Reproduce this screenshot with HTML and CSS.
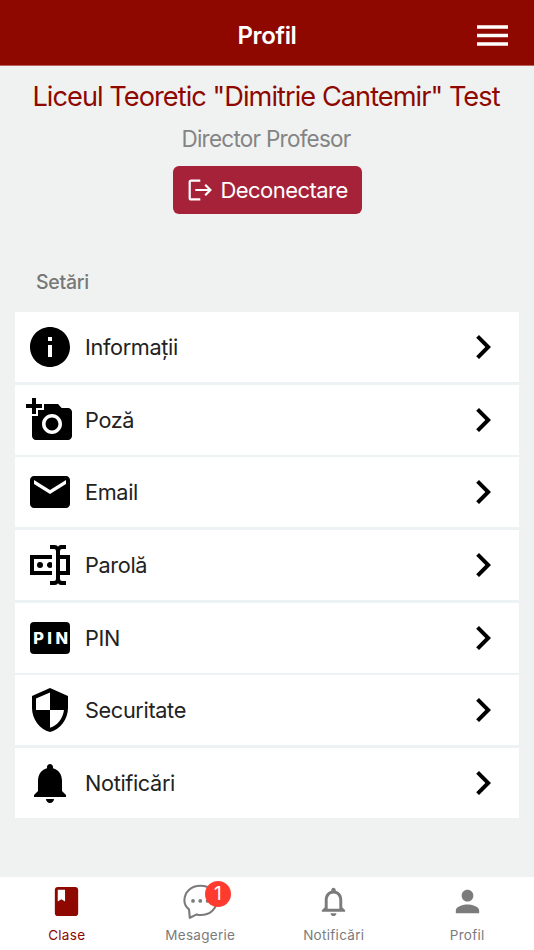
FILE: index.html
```html
<!DOCTYPE html>
<html lang="ro">
<head>
<meta charset="utf-8">
<meta name="viewport" content="width=device-width, initial-scale=1">
<title>Profil</title>
<link rel="stylesheet" href="styles.css">
</head>
<body>
<div class="app">
  <header class="topbar">
    <h1 class="topbar-title">Profil</h1>
    <button class="menu" aria-label="Meniu"><svg class="menu-icon" viewBox="0 0 31 21"><path d="M0 .3h31v3.4H0zM0 8.8h31v3.4H0zM0 17.3h31v3.4H0z"/></svg></button>
  </header>
  <main class="content">
    <section class="account">
      <h2 class="school">Liceul Teoretic "Dimitrie Cantemir" Test</h2>
      <p class="role">Director Profesor</p>
      <button class="logout">
        <svg class="logout-icon" viewBox="0 0 24 22"><path d="M12.3 1.6H3.2Q1.7 1.6 1.7 3.1V18.9Q1.7 20.4 3.2 20.4H12.3M7.3 11H22.3M17.2 5.7L22.4 11L17.2 16.3"/></svg>
        <span class="logout-text">Deconectare</span>
      </button>
    </section>
    <h3 class="group-title">Setări</h3>
    <ul class="settings">
      <li class="row"><svg class="icon" viewBox="0 0 24 24"><path d="M12 2C6.48 2 2 6.48 2 12s4.48 10 10 10 10-4.48 10-10S17.52 2 12 2zm1 15h-2v-6h2v6zm0-8h-2V7h2v2z"/></svg><span class="label">Informații</span><svg class="icon" viewBox="0 0 24 24"><path d="M8.59 16.59 13.17 12 8.59 7.41 10 6l6 6-6 6z"/></svg></li>
      <li class="row"><svg class="icon" viewBox="0 0 24 24"><path d="M3 4V1h2v3h3v2H5v3H3V6H0V4h3zm3 6V7h3V4h7l1.83 2H21c1.1 0 2 .9 2 2v12c0 1.1-.9 2-2 2H5c-1.1 0-2-.9-2-2V10h3zm7 9c2.76 0 5-2.24 5-5s-2.24-5-5-5-5 2.24-5 5 2.24 5 5 5zm-3.2-5c0 1.77 1.43 3.2 3.2 3.2s3.2-1.43 3.2-3.2-1.43-3.2-3.2-3.2-3.2 1.43-3.2 3.2z"/></svg><span class="label">Poză</span><svg class="icon" viewBox="0 0 24 24"><path d="M8.59 16.59 13.17 12 8.59 7.41 10 6l6 6-6 6z"/></svg></li>
      <li class="row"><svg class="icon" viewBox="0 0 24 24"><path d="M20 4H4c-1.1 0-2 .9-2 2v12c0 1.1.9 2 2 2h16c1.1 0 2-.9 2-2V6c0-1.1-.9-2-2-2zm0 4l-8 5-8-5V6l8 5 8-5v2z"/></svg><span class="label">Email</span><svg class="icon" viewBox="0 0 24 24"><path d="M8.59 16.59 13.17 12 8.59 7.41 10 6l6 6-6 6z"/></svg></li>
      <li class="row"><svg class="icon" viewBox="0 0 24 24"><path d="M17,7H22V17H17V19A1,1 0 0,0 18,20H20V22H17.5C16.95,22 16,21.55 16,21C16,21.55 15.05,22 14.5,22H12V20H14A1,1 0 0,0 15,19V5A1,1 0 0,0 14,4H12V2H14.5C15.05,2 16,2.45 16,3C16,2.45 16.95,2 17.5,2H20V4H18A1,1 0 0,0 17,5V7M2,7H13V9H4V15H13V17H2V7M20,15V9H17V15H20M8.5,12A1.5,1.5 0 0,0 7,10.5A1.5,1.5 0 0,0 5.5,12A1.5,1.5 0 0,0 7,13.5A1.5,1.5 0 0,0 8.5,12M13,10.89C12.39,10.33 11.44,10.38 10.88,11C10.32,11.6 10.37,12.55 11,13.11C11.55,13.63 12.43,13.63 13,13.11V10.89Z"/></svg><span class="label">Parolă</span><svg class="icon" viewBox="0 0 24 24"><path d="M8.59 16.59 13.17 12 8.59 7.41 10 6l6 6-6 6z"/></svg></li>
      <li class="row"><svg class="icon" viewBox="0 0 24 24"><rect x="2" y="4" width="20" height="16" rx="2"/><text class="pin" x="3.6" y="14.9" textLength="17.4" lengthAdjust="spacing">PIN</text></svg><span class="label">PIN</span><svg class="icon" viewBox="0 0 24 24"><path d="M8.59 16.59 13.17 12 8.59 7.41 10 6l6 6-6 6z"/></svg></li>
      <li class="row"><svg class="icon" viewBox="0 0 24 24"><path d="M12 1L3 5v6c0 5.55 3.84 10.74 9 12 5.16-1.26 9-6.45 9-12V5l-9-4zm0 10.99h7c-.53 4.12-3.28 7.79-7 8.94V12H5V6.3l7-3.11v8.8z"/></svg><span class="label">Securitate</span><svg class="icon" viewBox="0 0 24 24"><path d="M8.59 16.59 13.17 12 8.59 7.41 10 6l6 6-6 6z"/></svg></li>
      <li class="row"><svg class="icon" viewBox="0 0 24 24"><path d="M12 22c1.1 0 2-.9 2-2h-4c0 1.1.89 2 2 2zm6-6v-5c0-3.07-1.64-5.64-4.5-6.32V4c0-.83-.67-1.5-1.5-1.5s-1.5.67-1.5 1.5v.68C7.63 5.36 6 7.92 6 11v5l-2 2v1h16v-1l-2-2z"/></svg><span class="label">Notificări</span><svg class="icon" viewBox="0 0 24 24"><path d="M8.59 16.59 13.17 12 8.59 7.41 10 6l6 6-6 6z"/></svg></li>
    </ul>
  </main>
  <nav class="tabs">
    <a class="tab active"><svg class="tab-icon" viewBox="0 0 24 24"><path d="M18 2H6c-1.1 0-2 .9-2 2v16c0 1.1.9 2 2 2h12c1.1 0 2-.9 2-2V4c0-1.1-.9-2-2-2zM6 4h5v8l-2.5-1.5L6 12V4z"/></svg><span class="tab-label">Clase</span></a>
    <a class="tab"><span class="tab-badged"><svg class="tab-icon" viewBox="0 0 35 35"><path class="outline" d="M6.8 33.8L6 25.4C2.8 22.8 1.4 19.4 1.4 16.5C1.4 8 8 1.7 17.5 1.7S33.6 8 33.6 16.5S27 31 17.5 31Q15.5 31 13.8 30.4Z"/><circle cx="10" cy="16.9" r="1.9"/><circle cx="17.3" cy="16.9" r="1.9"/><circle cx="24.6" cy="16.9" r="1.9"/></svg><span class="badge">1</span></span><span class="tab-label">Mesagerie</span></a>
    <a class="tab"><svg class="tab-icon" viewBox="0 0 24 24"><path d="M12 22c1.1 0 2-.9 2-2h-4c0 1.1.9 2 2 2zm6-6v-5c0-3.07-1.63-5.64-4.5-6.32V4c0-.83-.67-1.5-1.5-1.5s-1.5.67-1.5 1.5v.68C7.64 5.36 6 7.92 6 11v5l-2 2v1h16v-1l-2-2zm-2 1H8v-6c0-2.48 1.51-4.5 4-4.5s4 2.02 4 4.5v6z"/></svg><span class="tab-label">Notificări</span></a>
    <a class="tab"><svg class="tab-icon" viewBox="0 0 24 24"><path d="M12 12c2.21 0 4-1.79 4-4s-1.79-4-4-4-4 1.79-4 4 1.79 4 4 4zm0 2c-2.67 0-8 1.34-8 4v2h16v-2c0-2.66-5.33-4-8-4z"/></svg><span class="tab-label">Profil</span></a>
  </nav>
</div>
</body>
</html>
```
FILE: styles.css
```css
* { box-sizing: border-box; }
body { margin: 0; font-family: Inter, "Liberation Sans", sans-serif; background: #f0f2f2; }
h1, h2, h3, p, ul { margin: 0; padding: 0; }
button { border: 0; font: inherit; padding: 0; }
svg { display: block; flex: none; fill: currentColor; }

.app { display: flex; flex-direction: column; height: 950px; overflow: hidden; }

.topbar { flex: none; display: grid; grid-template-columns: 1fr auto 1fr; align-items: center; height: 66px; padding: 6px 26px 0; background: #8e0800; color: #fff; border-bottom: 1px solid #b8625f; }
.topbar-title { grid-column: 2; font-size: 24px; line-height: 30px; font-weight: 600; letter-spacing: -0.35px; }
.menu { justify-self: end; width: 31px; background: none; color: #fff; }
.menu-icon { width: 31px; height: 21px; }

.content { flex: 1; display: flex; flex-direction: column; padding: 0 15px; }
.account { display: flex; flex-direction: column; align-items: center; padding-top: 13px; }
.school { padding-right: 2px; font-size: 27.2px; line-height: 36px; font-weight: 400; letter-spacing: -0.96px; color: #8e0800; white-space: nowrap; }
.role { margin-top: 9px; padding-right: 2px; font-size: 22.5px; line-height: 30px; letter-spacing: -0.74px; color: #848484; }
.logout { display: flex; align-items: center; gap: 9px; width: 189px; height: 48px; margin-top: 12px; padding-left: 15px; border-radius: 6px; background: #a52239; color: #fff; }
.logout-icon { width: 24px; height: 22px; fill: none; stroke: #fff; stroke-width: 2.2; }
.logout-text { font-size: 22px; line-height: 28px; letter-spacing: -0.55px; }
.group-title { margin: 56px 0 0 21px; font-size: 19.5px; line-height: 24px; font-weight: 500; letter-spacing: -0.3px; color: #777; }

.settings { display: grid; grid-auto-rows: 69.9px; gap: 2.7px; margin-top: 18.3px; list-style: none; background: #edf2f5; width: 503.5px; }
.row { display: flex; align-items: center; padding: 0 12px 0 11px; background: #fff; color: #000; }
.icon { width: 48px; height: 48px; }
.label { flex: 1; margin-left: 11px; font-size: 21.7px; line-height: 30px; letter-spacing: -0.35px; color: #222; }
.pin { fill: #fff; font-size: 8.2px; font-weight: 800; }

.tabs { flex: none; display: grid; grid-template-columns: repeat(4, 1fr); height: 73px; background: #fff; }
.tab { display: flex; flex-direction: column; align-items: center; padding-top: 7px; gap: 7px; color: #7b7b7b; }
.tab.active { color: #8e0800; }
.tab-icon { width: 35px; height: 35px; }
.tab-label { font-size: 13.5px; line-height: 18px; letter-spacing: 0.3px; }
.tab-badged { position: relative; }
.outline { fill: none; stroke: currentColor; stroke-width: 2.1; stroke-linejoin: round; }
.badge { position: absolute; left: 22px; top: -3px; width: 26px; height: 26px; border-radius: 50%; background: #ff3b30; color: #fff; font-size: 19px; line-height: 26px; text-align: center; }
```
